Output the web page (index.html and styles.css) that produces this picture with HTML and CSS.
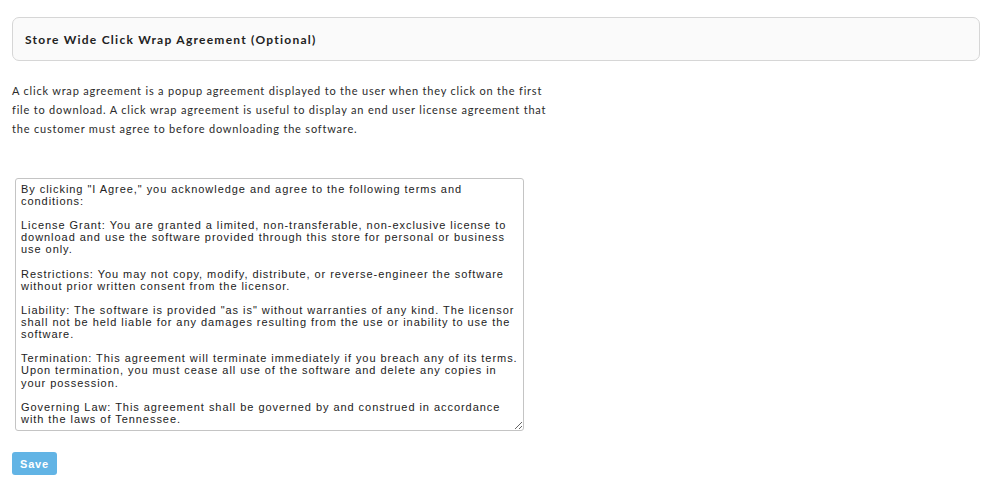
FILE: index.html
```html
<!DOCTYPE html>
<html lang="en">

<head>
    <meta charset="UTF-8">
    <meta name="viewport" content="width=device-width, initial-scale=1.0">
    <title>Click Wrap Agreement</title>
    <link rel="stylesheet" href="styles.css">
</head>

<body>
    <div class="settings">
        <div class="panel-heading">Store Wide Click Wrap Agreement (Optional)</div>
        <p class="help-text">A click wrap agreement is a popup agreement displayed to the user when they click on the first<br>file to download. A click wrap agreement is useful to display an end user license agreement that<br>the customer must agree to before downloading the software.</p>
        <textarea class="agreement" id="agreement">By clicking "I Agree," you acknowledge and agree to the following terms and
conditions:

License Grant: You are granted a limited, non-transferable, non-exclusive license to
download and use the software provided through this store for personal or business
use only.

Restrictions: You may not copy, modify, distribute, or reverse-engineer the software
without prior written consent from the licensor.

Liability: The software is provided "as is" without warranties of any kind. The licensor
shall not be held liable for any damages resulting from the use or inability to use the
software.

Termination: This agreement will terminate immediately if you breach any of its terms.
Upon termination, you must cease all use of the software and delete any copies in
your possession.

Governing Law: This agreement shall be governed by and construed in accordance
with the laws of Tennessee.</textarea>
        <button class="save-button">Save</button>
    </div>
</body>

</html>
```

FILE: styles.css
```css
* {
    margin: 0;
    padding: 0;
    box-sizing: border-box;
}

body {
    background: #fff;
    font-family: Lato, 'Open Sans', sans-serif;
    color: #333;
}

.settings {
    display: flex;
    flex-direction: column;
    align-items: flex-start;
    padding: 17px 16px 0 12px;
}

.panel-heading {
    align-self: stretch;
    height: 44px;
    padding: 0 12px;
    display: flex;
    align-items: center;
    background-color: #fafafa;
    border: 1px solid #d6d6d6;
    border-radius: 7px;
    font-size: 12px;
    font-weight: bold;
    letter-spacing: 1.25px;
    color: #222;
}

.help-text {
    margin-top: 20px;
    font-size: 11px;
    line-height: 19px;
    letter-spacing: 0.8px;
    color: #2b2b2b;
}

.agreement {
    margin: 40px 0 0 3px;
    width: 509px;
    height: 253px;
    padding: 4px 1px 3px 5px;
    border: 1px solid #c4c4c4;
    border-radius: 3px;
    font-family: 'Liberation Sans', Arial, sans-serif;
    font-size: 11px;
    line-height: 12.1px;
    letter-spacing: 0.95px;
    color: #222;
    resize: both;
}

.save-button {
    margin-top: 21px;
    width: 45px;
    height: 23px;
    border: none;
    border-radius: 3px;
    background-color: #62b4e5;
    color: #fff;
    font-family: 'Liberation Sans', Arial, sans-serif;
    font-size: 11px;
    font-weight: bold;
    letter-spacing: 0.8px;
    cursor: pointer;
}
```
